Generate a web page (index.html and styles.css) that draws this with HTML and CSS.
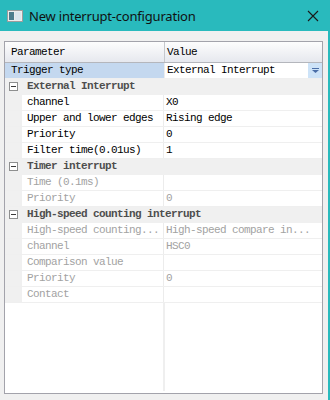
FILE: index.html
```html
<!DOCTYPE html>
<html lang="en">
<head>
  <meta charset="UTF-8">
  <title>New interrupt-configuration</title>
  <link rel="stylesheet" href="styles.css">
</head>
<body>
  <div class="window">
    <div class="titlebar">
      <svg class="app-icon" width="16" height="12" viewBox="0 0 16 12">
        <rect x="0.5" y="0.5" width="15" height="11" fill="#ececec" stroke="#9c9c9c"/>
        <rect x="2" y="2" width="5" height="8" fill="#4d7d8c"/>
        <rect x="8" y="2" width="6" height="8" fill="#dce6ec"/>
      </svg>
      <span class="title">New interrupt-configuration</span>
      <svg class="close" width="12" height="12" viewBox="0 0 12 12">
        <path d="M1 1 L11 11 M11 1 L1 11" stroke="#1a1a1a" stroke-width="1.1" fill="none"/>
      </svg>
    </div>

    <div class="client">
      <div class="grid">
        <div class="head">
          <div class="hcell name">Parameter</div>
          <div class="hcell value">Value</div>
        </div>

        <div class="row">
          <div class="cell name selected">Trigger type</div>
          <div class="cell value combo">
            <span>External Interrupt</span>
            <span class="drop">
              <svg width="7" height="5" viewBox="0 0 7 5">
                <rect x="0" y="0" width="7" height="1" fill="#4a6ea8"/>
                <path d="M0 2 L7 2 L3.5 5 Z" fill="#4a6ea8"/>
              </svg>
            </span>
          </div>
        </div>

        <!-- External Interrupt -->
        <div class="row group"><span class="toggle"></span><span class="gtext">External Interrupt</span></div>
        <div class="row"><div class="gutter"></div><div class="cell sub">channel</div><div class="cell value">X0</div></div>
        <div class="row"><div class="gutter"></div><div class="cell sub">Upper and lower edges</div><div class="cell value">Rising edge</div></div>
        <div class="row"><div class="gutter"></div><div class="cell sub">Priority</div><div class="cell value">0</div></div>
        <div class="row"><div class="gutter"></div><div class="cell sub">Filter time(0.01us)</div><div class="cell value">1</div></div>

        <!-- Timer interrupt -->
        <div class="row group"><span class="toggle"></span><span class="gtext">Timer interrupt</span></div>
        <div class="row off"><div class="gutter"></div><div class="cell sub">Time (0.1ms)</div><div class="cell value"></div></div>
        <div class="row off"><div class="gutter"></div><div class="cell sub">Priority</div><div class="cell value">0</div></div>

        <!-- High-speed counting interrupt -->
        <div class="row group"><span class="toggle"></span><span class="gtext">High-speed counting interrupt</span></div>
        <div class="row off"><div class="gutter"></div><div class="cell sub">High-speed counting...</div><div class="cell value">High-speed compare in...</div></div>
        <div class="row off"><div class="gutter"></div><div class="cell sub">channel</div><div class="cell value">HSC0</div></div>
        <div class="row off"><div class="gutter"></div><div class="cell sub">Comparison value</div><div class="cell value"></div></div>
        <div class="row off"><div class="gutter"></div><div class="cell sub">Priority</div><div class="cell value">0</div></div>
        <div class="row off"><div class="gutter"></div><div class="cell sub">Contact</div><div class="cell value"></div></div>

        <div class="filler">
          <div class="fname"></div>
          <div class="fvalue"></div>
        </div>
      </div>
    </div>
  </div>
</body>
</html>
```

FILE: styles.css
```css
html, body {
  margin: 0;
  padding: 0;
}
body {
  width: 330px;
  height: 400px;
  background-color: #f0f0f0;
  overflow: hidden;
}
.window {
  width: 330px;
  height: 400px;
  display: flex;
  flex-direction: column;
}
.titlebar {
  height: 31px;
  background-color: #29babd;
  display: flex;
  align-items: center;
  padding-left: 7px;
  flex-shrink: 0;
}
.app-icon {
  margin-top: 1px;
}
.title {
  font-family: "Noto Sans", sans-serif;
  font-size: 13px;
  letter-spacing: -0.2px;
  color: #111;
  margin-left: 6px;
  flex: 1;
}
.close {
  margin-right: 11px;
  margin-top: 1px;
}
.client {
  flex: 1;
  border-right: 2px solid #29babd;
  padding: 10px 5px 6px 4px;
  display: flex;
}
.grid {
  flex: 1;
  background-color: #fff;
  border: 1px solid #a3a3ab;
  display: flex;
  flex-direction: column;
  font-family: "Liberation Mono", monospace;
  font-size: 11px;
  letter-spacing: -0.6px;
  color: #000;
}
.head {
  display: flex;
  height: 20px;
  background: linear-gradient(#fdfdfd, #e6e8ee);
  border-bottom: 1px solid #b4b6bc;
}
.hcell {
  line-height: 20px;
  padding-left: 6px;
}
.hcell.name {
  width: 153px;
  border-right: 1px solid #c6c8cc;
}
.hcell.value {
  flex: 1;
  padding-left: 2px;
}
.row {
  display: flex;
  height: 15px;
  line-height: 15px;
  border-bottom: 1px solid #efefef;
  white-space: nowrap;
}
.gutter {
  width: 17px;
  background-color: #f0f0f0;
}
.cell {
  overflow: hidden;
}
.cell.name {
  width: 153px;
  padding-left: 6px;
  border-right: 1px solid #ececec;
}
.cell.selected {
  background-color: #c4d8ef;
}
.cell.sub {
  width: 136px;
  padding-left: 5px;
  border-right: 1px solid #ececec;
}
.cell.value {
  flex: 1;
  padding-left: 2px;
}
.combo {
  display: flex;
  justify-content: space-between;
}
.drop {
  width: 14px;
  background-color: #cde3f8;
  display: flex;
  align-items: center;
  justify-content: center;
}
.drop svg {
  display: block;
}
.group {
  background-color: #f0f0f0;
  align-items: center;
  border-bottom-color: #f0f0f0;
}
.toggle {
  width: 7px;
  height: 7px;
  border: 1px solid #8e8f8f;
  background-color: #fff;
  margin-left: 4px;
  margin-right: 9px;
  position: relative;
}
.toggle::after {
  content: "";
  position: absolute;
  left: 1px;
  top: 3px;
  width: 5px;
  height: 1px;
  background-color: #3a3a3a;
}
.gtext {
  font-weight: bold;
  color: #4e4e4e;
}
.off .cell {
  color: #a2a2a2;
}
.filler {
  flex: 1;
  display: flex;
}
.fname {
  width: 158px;
  border-right: 2px solid #efefef;
  margin-bottom: 2px;
}
.fvalue {
  flex: 1;
}
```
